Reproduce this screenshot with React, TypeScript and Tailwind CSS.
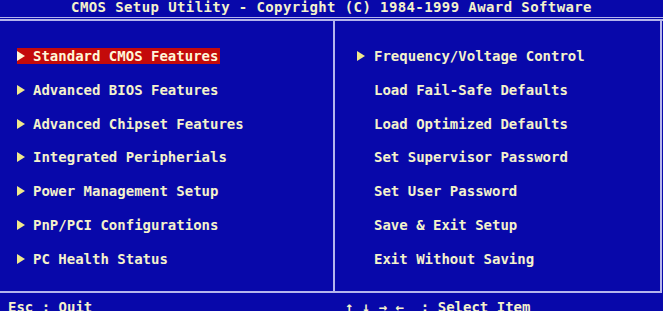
import React from "react";

const left = [
  "Standard CMOS Features",
  "Advanced BIOS Features",
  "Advanced Chipset Features",
  "Integrated Peripherials",
  "Power Management Setup",
  "PnP/PCI Configurations",
  "PC Health Status",
];

const right: { t: string; arrow: boolean }[] = [
  { t: "Frequency/Voltage Control", arrow: true },
  { t: "Load Fail-Safe Defaults", arrow: false },
  { t: "Load Optimized Defaults", arrow: false },
  { t: "Set Supervisor Password", arrow: false },
  { t: "Set User Password", arrow: false },
  { t: "Save & Exit Setup", arrow: false },
  { t: "Exit Without Saving", arrow: false },
];

function Arrow({ color }: { color: string }) {
  return (
    <span className="w-4 h-4 flex items-center shrink-0">
      <svg width="8" height="10" viewBox="0 0 8 10">
        <polygon points="0,0 8,5 0,10" fill={color} />
      </svg>
    </span>
  );
}

export default function App() {
  return (
    <div
      className="w-[663px] h-[311px] overflow-hidden bg-[#0808aa] text-[#f4f2cc] font-bold text-[14px] leading-4"
      style={{ fontFamily: '"DejaVu Sans Mono", "Liberation Mono", monospace' }}
    >
      <div className="h-[17px] flex justify-center">
        <div className="-mt-px whitespace-pre tracking-[0.4px]">
          CMOS Setup Utility - Copyright (C) 1984-1999 Award Software
        </div>
      </div>
      <div className="h-px bg-[#b4b4ec]" />
      <div className="h-px" />
      <div className="h-[2px] bg-[#b4b4ec]" />
      <div className="flex h-[270px] w-[662px] border-r-2 border-[#b4b4ec]">
        <div className="w-[333px] pt-[27px] pl-[17px] flex flex-col gap-[17.8px]">
          {left.map((t, i) => (
            <div key={t} className="flex">
              <div className={`flex h-4 whitespace-pre pr-0.5 ${i === 0 ? "bg-[#c40a0a] text-[#fff6d8]" : ""}`}>
                <Arrow color={i === 0 ? "#fff6d8" : "#f0e88c"} />
                <span>{t}</span>
              </div>
            </div>
          ))}
        </div>
        <div className="w-[2px] bg-[#b4b4ec]" />
        <div className="flex-1 pt-[27px] pl-[22px] flex flex-col gap-[17.8px]">
          {right.map((r) => (
            <div key={r.t} className="flex h-4 whitespace-pre">
              {r.arrow ? <Arrow color="#f0e88c" /> : <span className="w-4 shrink-0" />}
              <span className="pl-px">{r.t}</span>
            </div>
          ))}
        </div>
      </div>
      <div className="h-[2px] w-[662px] bg-[#b4b4ec]" />
      <div className="flex pt-[6px] whitespace-pre">
        <div className="w-[345px] pl-[8px]">Esc : Quit</div>
        <div>{"↑ ↓ → ←  : Select Item"}</div>
      </div>
    </div>
  );
}
